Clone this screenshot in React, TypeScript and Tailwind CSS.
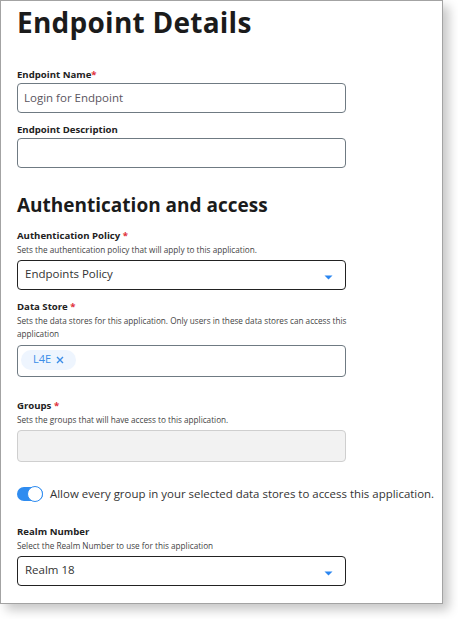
import React from "react";

const font = { fontFamily: '"Open Sans", "DejaVu Sans", sans-serif' };

function Label({ text, required, tight }: { text: string; required?: boolean; tight?: boolean }) {
  return (
    <div className="text-[9.6px] font-bold text-[#222] leading-[12px]">
      {text}
      {required && <span className="text-[#e0303a]">{tight ? "*" : " *"}</span>}
    </div>
  );
}

function Helper({ children }: { children: React.ReactNode }) {
  return <div className="w-[336px] text-[8.2px] text-[#444] leading-[13px] mt-[1px]">{children}</div>;
}

function Caret() {
  return (
    <svg width="9" height="5" viewBox="0 0 9 5" className="absolute right-[12px] top-[14px]">
      <path d="M0.5 0.5 L8.5 0.5 L4.5 4.5 Z" fill="#2b86f0" />
    </svg>
  );
}

function SelectBox({ value }: { value: string }) {
  return (
    <div className="relative mt-[4px] h-[30px] w-[329px] rounded-[4px] border border-[#222] bg-white px-[7px] flex items-center text-[11.5px] text-[#333]">
      <span className="-mt-[2px]">{value}</span>
      <Caret />
    </div>
  );
}

export default function App() {
  return (
    <div className="min-h-screen bg-white" style={font}>
      <div className="w-[443px] h-[604px] border border-[#a3a3a3] bg-white shadow-[6px_6px_10px_rgba(0,0,0,0.22)] pl-[16px] pt-[3px]">
        <h1 className="text-[28px] font-bold text-[#1b1b1b] leading-[36px] tracking-[0.25px]">Endpoint Details</h1>

        <div className="mt-[29px]">
          <Label text="Endpoint Name" required tight />
          <div className="mt-[2px] h-[30px] w-[329px] rounded-[4px] border border-[#6f7a82] px-[6px] flex items-center text-[11.5px] text-[#5a5560]">
            Login for Endpoint
          </div>
        </div>

        <div className="mt-[11px]">
          <Label text="Endpoint Description" />
          <div className="mt-[2px] h-[30px] w-[329px] rounded-[4px] border border-[#6f7a82]" />
        </div>

        <h2 className="mt-[24px] text-[19px] font-bold text-[#1b1b1b] leading-[26px]">Authentication and access</h2>

        <div className="mt-[12px]">
          <Label text="Authentication Policy" required />
          <Helper>Sets the authentication policy that will apply to this application.</Helper>
          <SelectBox value="Endpoints Policy" />
        </div>

        <div className="mt-[11px]">
          <Label text="Data Store" required />
          <Helper>
            Sets the data stores for this application. Only users in these data stores can access this application
          </Helper>
          <div className="mt-[5px] h-[32px] w-[329px] rounded-[4px] border border-[#6f7a82] flex items-center px-[3px]">
            <div className="h-[20px] px-[12px] rounded-full bg-[#eef5fe] flex items-center gap-[5px] text-[11px] text-[#3b8de8] -mt-[3px]">
              <span>L4E</span>
              <svg width="8" height="8" viewBox="0 0 8 8">
                <path d="M1 1 L7 7 M7 1 L1 7" stroke="#3b8de8" strokeWidth="1.4" />
              </svg>
            </div>
          </div>
        </div>

        <div className="mt-[23px]">
          <Label text="Groups" required />
          <Helper>Sets the groups that will have access to this application.</Helper>
          <div className="mt-[4px] h-[32px] w-[329px] rounded-[4px] border border-[#cfcfcf] bg-[#f2f2f2]" />
        </div>

        <div className="mt-[24px] flex items-center gap-[7px]">
          <div className="relative h-[14px] w-[26px] rounded-full bg-[#2f8cf0]">
            <div className="absolute right-0 -top-[1px] h-[16px] w-[16px] rounded-full bg-white border-[1.5px] border-[#2f8cf0]" />
          </div>
          <span className="text-[11.45px] text-[#333] leading-[16px]">Allow every group in your selected data stores to access this application.</span>
        </div>

        <div className="mt-[24px]">
          <Label text="Realm Number" />
          <Helper>Select the Realm Number to use for this application</Helper>
          <SelectBox value="Realm 18" />
        </div>
      </div>
    </div>
  );
}
